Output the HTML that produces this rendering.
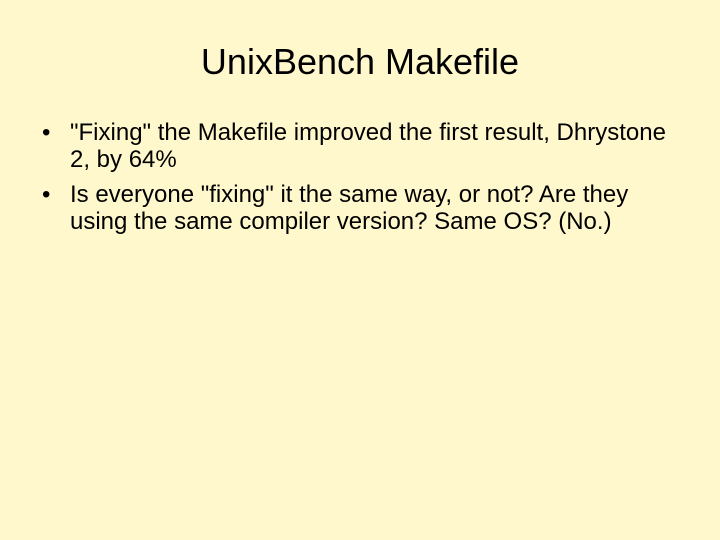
<!DOCTYPE html>
<html><head><style>
html,body{margin:0;padding:0}
body{width:720px;height:540px;background:#fff8cc;font-family:"Liberation Sans",Arial,sans-serif;color:#000;position:relative;overflow:hidden}
h1{position:absolute;top:40px;left:0;width:720px;text-align:center;font-weight:normal;font-size:36px;margin:0;line-height:44px}
.b{position:absolute;left:70px;font-size:24px;line-height:27px;width:645px;white-space:nowrap}
.b:before{content:"•";position:absolute;left:-28px}
</style></head><body>
<h1>UnixBench Makefile</h1>
<div class="b" style="top:119px">"Fixing" the Makefile improved the first result, Dhrystone<br>2, by 64%</div>
<div class="b" style="top:181px">Is everyone "fixing" it the same way, or not? Are they<br>using the same compiler version? Same OS? (No.)</div>
</body></html>
